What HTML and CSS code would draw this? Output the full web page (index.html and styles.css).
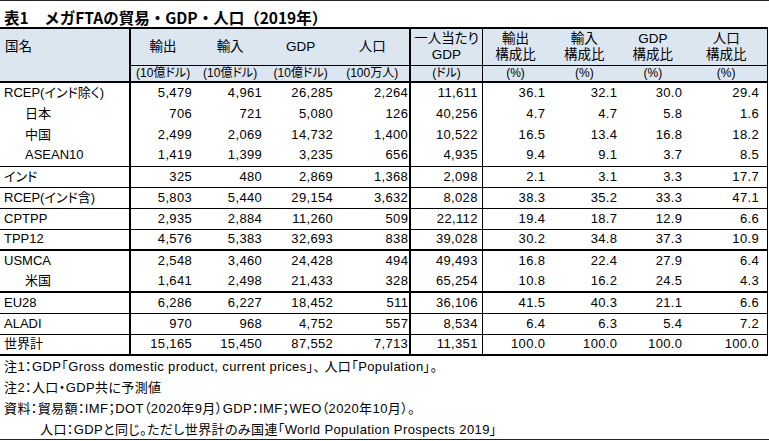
FILE: index.html
```html
<!DOCTYPE html>
<html lang="ja">
<head>
<meta charset="utf-8">
<title>表1 メガFTAの貿易・GDP・人口（2019年）</title>
<link rel="stylesheet" href="styles.css">
</head>
<body>
<div class="sheet">
  <h1 class="title">表1　メガFTAの貿易・GDP・人口（2019年）</h1>
  <table class="fta">
    <colgroup>
      <col class="w-name"><col class="w-exp"><col class="w-imp"><col class="w-gdp"><col class="w-pop">
      <col class="w-pc"><col class="w-s1"><col class="w-s2"><col class="w-s3"><col class="w-s4">
    </colgroup>
    <thead>
      <tr class="hrow1">
        <th rowspan="2" class="name-h">国名</th>
        <th>輸出</th>
        <th>輸入</th>
        <th>GDP</th>
        <th class="bold-r">人口</th>
        <th class="thin-r">一人当たり<br>GDP</th>
        <th>輸出<br>構成比</th>
        <th>輸入<br>構成比</th>
        <th>GDP<br>構成比</th>
        <th>人口<br>構成比</th>
      </tr>
      <tr class="hrow2">
        <th>(10億ドル)</th>
        <th>(10億ドル)</th>
        <th>(10億ドル)</th>
        <th class="bold-r">(100万人)</th>
        <th class="thin-r">(ドル)</th>
        <th>(%)</th>
        <th>(%)</th>
        <th>(%)</th>
        <th>(%)</th>
      </tr>
    </thead>
    <tbody>
      <tr><td class="name">RCEP(インド除く)</td><td>5,479</td><td>4,961</td><td>26,285</td><td class="bold-r">2,264</td><td class="thin-r pc">11,611</td><td>36.1</td><td>32.1</td><td>30.0</td><td class="last">29.4</td></tr>
      <tr><td class="name sub">日本</td><td>706</td><td>721</td><td>5,080</td><td class="bold-r">126</td><td class="thin-r pc">40,256</td><td>4.7</td><td>4.7</td><td>5.8</td><td class="last">1.6</td></tr>
      <tr><td class="name sub">中国</td><td>2,499</td><td>2,069</td><td>14,732</td><td class="bold-r">1,400</td><td class="thin-r pc">10,522</td><td>16.5</td><td>13.4</td><td>16.8</td><td class="last">18.2</td></tr>
      <tr><td class="name sub">ASEAN10</td><td>1,419</td><td>1,399</td><td>3,235</td><td class="bold-r">656</td><td class="thin-r pc">4,935</td><td>9.4</td><td>9.1</td><td>3.7</td><td class="last">8.5</td></tr>
      <tr class="g-thin"><td class="name">インド</td><td>325</td><td>480</td><td>2,869</td><td class="bold-r">1,368</td><td class="thin-r pc">2,098</td><td>2.1</td><td>3.1</td><td>3.3</td><td class="last">17.7</td></tr>
      <tr class="g-thin"><td class="name">RCEP(インド含)</td><td>5,803</td><td>5,440</td><td>29,154</td><td class="bold-r">3,632</td><td class="thin-r pc">8,028</td><td>38.3</td><td>35.2</td><td>33.3</td><td class="last">47.1</td></tr>
      <tr class="g-thin"><td class="name">CPTPP</td><td>2,935</td><td>2,884</td><td>11,260</td><td class="bold-r">509</td><td class="thin-r pc">22,112</td><td>19.4</td><td>18.7</td><td>12.9</td><td class="last">6.6</td></tr>
      <tr class="g-thin"><td class="name">TPP12</td><td>4,576</td><td>5,383</td><td>32,693</td><td class="bold-r">838</td><td class="thin-r pc">39,028</td><td>30.2</td><td>34.8</td><td>37.3</td><td class="last">10.9</td></tr>
      <tr class="g-thick"><td class="name">USMCA</td><td>2,548</td><td>3,460</td><td>24,428</td><td class="bold-r">494</td><td class="thin-r pc">49,493</td><td>16.8</td><td>22.4</td><td>27.9</td><td class="last">6.4</td></tr>
      <tr><td class="name sub">米国</td><td>1,641</td><td>2,498</td><td>21,433</td><td class="bold-r">328</td><td class="thin-r pc">65,254</td><td>10.8</td><td>16.2</td><td>24.5</td><td class="last">4.3</td></tr>
      <tr class="g-thick"><td class="name">EU28</td><td>6,286</td><td>6,227</td><td>18,452</td><td class="bold-r">511</td><td class="thin-r pc">36,106</td><td>41.5</td><td>40.3</td><td>21.1</td><td class="last">6.6</td></tr>
      <tr class="g-thin"><td class="name">ALADI</td><td>970</td><td>968</td><td>4,752</td><td class="bold-r">557</td><td class="thin-r pc">8,534</td><td>6.4</td><td>6.3</td><td>5.4</td><td class="last">7.2</td></tr>
      <tr class="g-thin"><td class="name">世界計</td><td>15,165</td><td>15,450</td><td>87,552</td><td class="bold-r">7,713</td><td class="thin-r pc">11,351</td><td>100.0</td><td>100.0</td><td>100.0</td><td class="last">100.0</td></tr>
    </tbody>
  </table>
  <div class="notes">
    <p class="note">注1：GDP「Gross domestic product, current prices」、 人口「Population」。</p>
    <p class="note">注2：人口・GDP共に予測値</p>
    <p class="note">資料：貿易額：IMF；DOT（2020年9月）GDP：IMF；WEO（2020年10月）。</p>
    <p class="note indent">人口：GDPと同じ。ただし世界計のみ国連「World Population Prospects 2019」</p>
  </div>
</div>
</body>
</html>
```

FILE: styles.css
```css
* { box-sizing: border-box; }

html, body {
  margin: 0;
  padding: 0;
  background: #fff;
}

body {
  font-family: "Liberation Sans", "Noto Sans CJK JP", sans-serif;
  font-feature-settings: "palt";
  color: #000;
  font-size: 13px;
}

.sheet {
  width: 769px;
  height: 440px;
  border-top: 1px solid #222;
  border-bottom: 1px solid #222;
  display: flex;
  flex-direction: column;
}

.title {
  margin: 0;
  height: 26px;
  padding: 7px 0 0 4px;
  font-family: "Noto Sans CJK JP", sans-serif;
  font-feature-settings: normal;
  font-size: 15.5px;
  line-height: 19px;
  font-weight: 700;
  letter-spacing: 0;
}

.fta {
  border-collapse: collapse;
  table-layout: fixed;
  width: 768px;
  border-top: 2px solid #000;
  border-right: 1px solid #000;
  border-bottom: 2px solid #000;
}

.w-name { width: 130px; }
.w-exp { width: 65px; }
.w-imp { width: 70px; }
.w-gdp { width: 71px; }
.w-pop { width: 74px; }
.w-pc { width: 72px; }
.w-s1 { width: 66px; }
.w-s2 { width: 72px; }
.w-s3 { width: 65px; }
.w-s4 { width: 82px; }

.fta th {
  background: #dce6f1;
  font-weight: 400;
  text-align: center;
  padding: 0;
  white-space: nowrap;
}

.hrow1 th {
  height: 37px;
  font-size: 13.5px;
  line-height: 16px;
  border-bottom: 1px solid #000;
  padding-top: 1px;
}

.hrow2 th {
  height: 17px;
  font-size: 12px;
  line-height: 14px;
  border-bottom: 2px solid #000;
}

.fta th.name-h {
  text-align: left;
  vertical-align: top;
  padding: 10px 0 0 5px;
  border-bottom: 2px solid #000;
  border-right: 2px solid #000;
}

.fta td {
  height: 21px;
  padding: 0 3px 0 0;
  text-align: right;
  line-height: 16px;
  letter-spacing: 0.35px;
  white-space: nowrap;
}

.fta td.name {
  text-align: left;
  padding-left: 4px;
  letter-spacing: 0;
  border-right: 2px solid #000;
}

.fta td.sub { padding-left: 25px; }

.fta .bold-r { border-right: 2px solid #000; padding-right: 1px; }
.fta .thin-r { border-right: 1px solid #000; }
.fta td.pc { padding-right: 4px; }
.fta td.last { padding-right: 8px; }

.g-thin td { border-top: 1px solid #000; }
.g-thick td { border-top: 2px solid #000; }

.notes {
  padding: 0 0 0 4px;
}

.note {
  margin: 0;
  height: 21px;
  line-height: 21px;
  letter-spacing: 0.4px;
  white-space: nowrap;
}

.note.indent { padding-left: 36px; }
```
